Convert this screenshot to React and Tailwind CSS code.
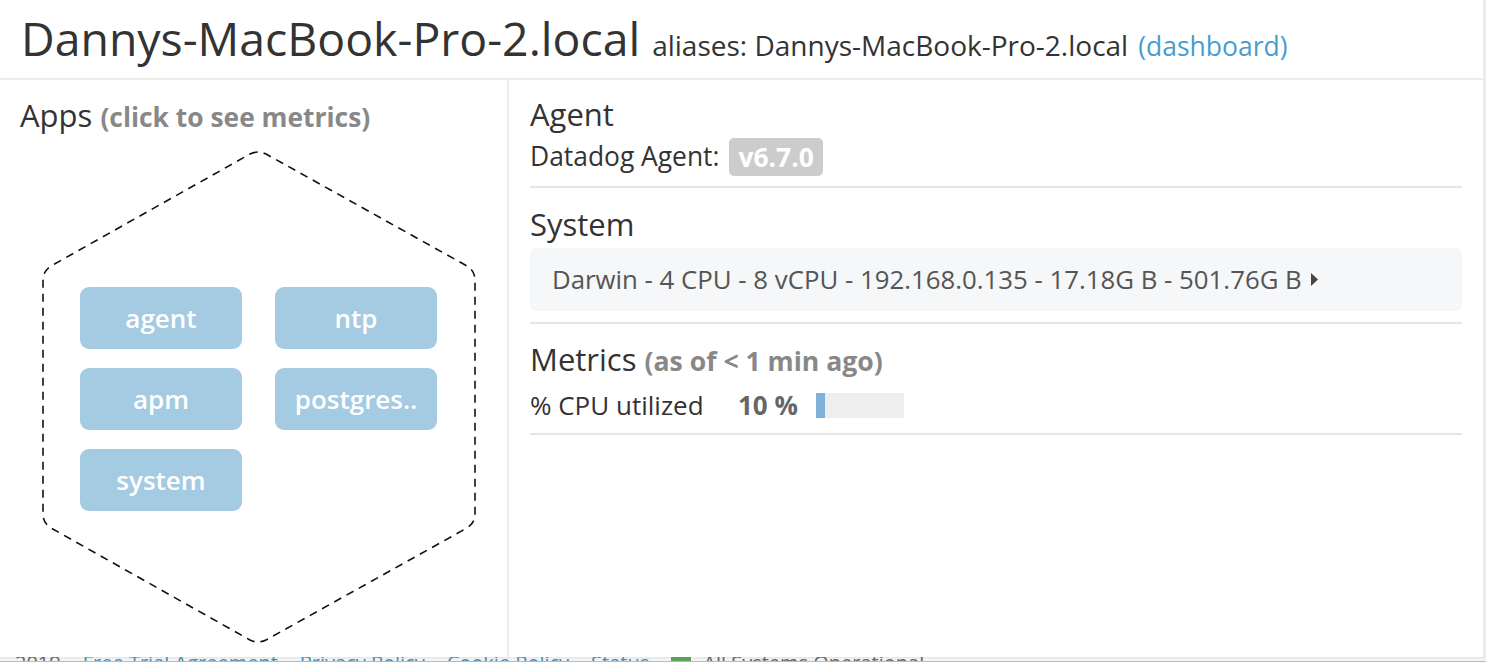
import React from 'react';

const apps = ['agent', 'ntp', 'apm', 'postgres..', 'system'];

function Hexagon() {
  // dashed outline drawn behind the app buttons
  return (
    <svg className="absolute left-0 top-0 pointer-events-none" width="509" height="580" viewBox="0 0 509 580">
      <path
        d="M250 74 Q258 70 266 74 L467 186 Q475 191 475 200 L475 434 Q475 443 467 448 L266 560 Q258 564 250 560 L51 448 Q43 443 43 434 L43 200 Q43 191 51 186 Z"
        fill="none"
        stroke="#111"
        strokeWidth="1.6"
        strokeDasharray="8 6"
      />
    </svg>
  );
}

export default function App() {
  return (
    <div className="h-[662px] w-[1486px] overflow-hidden bg-[#f4f4f4] font-['Open_Sans','Noto_Sans',sans-serif] text-[#333]">
      <div className="h-[657px] bg-white border-r-[3px] border-[#ececec] shadow-[0_1px_2px_rgba(0,0,0,0.08)] flex flex-col">
        {/* Header */}
        <div className="h-[80px] flex items-baseline pl-[21px] pt-[6px] border-b-2 border-[#ececec] whitespace-nowrap">
          <h1 className="text-[46.4px] leading-[64px]">Dannys-MacBook-Pro-2.local</h1>
          <span className="ml-[12px] text-[28px] text-[#333]">aliases: Dannys-MacBook-Pro-2.local</span>
          <a className="ml-[10px] text-[26.5px] text-[#4a9cd0]">(dashboard)</a>
        </div>

        <div className="flex flex-1">
          {/* Apps */}
          <div className="relative w-[509px] border-r-2 border-[#ececec]">
            <Hexagon />
            <div className="relative pl-[20px] pt-[16px] text-[31px] leading-[38px]">
              Apps <span className="text-[26.4px] font-bold text-[#888]">(click to see metrics)</span>
            </div>
            <div className="relative ml-[80px] mt-[151px] grid grid-cols-[162px_162px] gap-x-[33px] gap-y-[19px]">
              {apps.map((a) => (
                <button
                  key={a}
                  className="h-[62px] rounded-[9px] bg-[#a5cbe2] text-white text-[26px] font-semibold"
                >
                  {a}
                </button>
              ))}
            </div>
          </div>

          {/* Details */}
          <div className="flex-1 pl-[21px] pr-[21px] pt-[15px]">
            <div className="pb-[9px] border-b-2 border-[#e6e6e6]">
              <div className="text-[31px] leading-[38px]">Agent</div>
              <div className="mt-[4px] flex items-center gap-[10px] text-[26.4px]">
                <span>Datadog Agent:</span>
                <span className="rounded-[5px] bg-[#cccccc] px-[9px] h-[38px] leading-[38px] font-bold text-white">v6.7.0</span>
              </div>
            </div>

            <div className="pt-[17px] pb-[11px] border-b-2 border-[#e6e6e6]">
              <div className="text-[31px] leading-[38px]">System</div>
              <div className="mt-[5px] h-[63px] rounded-[6px] bg-[#f6f7f8] flex items-center pl-[22px] text-[25.8px] text-[#555]">
                Darwin - 4 CPU - 8 vCPU - 192.168.0.135 - 17.18G B - 501.76G B
                <svg className="ml-[9px]" width="7" height="13" viewBox="0 0 7 13">
                  <path d="M0 0 L7 6.5 L0 13 Z" fill="#444" />
                </svg>
              </div>
            </div>

            <div className="pt-[16px] pb-[15px] border-b-2 border-[#e6e6e6]">
              <div className="text-[31px] leading-[38px]">
                Metrics <span className="text-[26.6px] font-bold text-[#888]">(as of &lt; 1 min ago)</span>
              </div>
              <div className="mt-[13px] flex items-center text-[26px] h-[25px]">
                <span className="w-[208px]">% CPU utilized</span>
                <span className="w-[78px] font-bold text-[#666]">10 %</span>
                <div className="w-[88px] h-[25px] bg-[#eeeeee]">
                  <div className="h-full bg-[#7fb2d6]" style={{ width: '10%' }} />
                </div>
              </div>
            </div>
          </div>
        </div>
      </div>

      {/* Footer, mostly hidden below the panel */}
      <div className="h-[4px] overflow-hidden border-b border-[#bbb] box-content">
        <div className="-mt-[4px] flex items-start gap-[22px] pl-[15px] text-[20px] leading-[20px] whitespace-nowrap">
          <span className="text-[#666]">2019</span>
          <span className="text-[#4a8db8]">Free Trial Agreement</span>
          <span className="text-[#4a8db8]">Privacy Policy</span>
          <span className="text-[#4a8db8]">Cookie Policy</span>
          <span className="text-[#4a8db8]">Status</span>
          <span className="flex items-start gap-[12px] text-[#666]">
            <span className="inline-block w-[20px] h-[20px] bg-[#5aa05a]" />
            All Systems Operational
          </span>
        </div>
      </div>
    </div>
  );
}
